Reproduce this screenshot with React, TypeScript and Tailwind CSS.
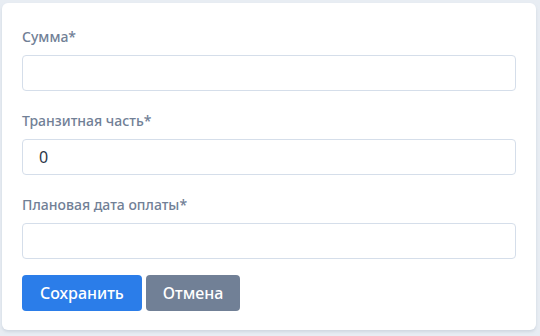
export default function App() {
  const label = "block text-[14px] font-medium text-[#718096] leading-[20px] mb-[8px]";
  const input =
    "block w-full h-[36px] rounded-[4px] border border-[#d5deea] bg-white px-4 text-[16px] text-[#2d3748] outline-none";
  return (
    <div
      className="w-[540px] h-[336px] bg-[#e8edf3] pt-[3px] pl-[2px] pr-[4px]"
      style={{ fontFamily: '"Noto Sans", "Open Sans", sans-serif' }}
    >
      <div className="bg-white rounded-[6px] h-[327px] shadow-[0_2px_3px_rgba(160,174,192,0.35)] px-5 pt-[24px]">
        <label className={label}>Сумма*</label>
        <input className={input} defaultValue="" />
        <label className={label + " mt-[20px]"}>Транзитная часть*</label>
        <input className={input} defaultValue="0" />
        <label className={label + " mt-[20px]"}>Плановая дата оплаты*</label>
        <input className={input} defaultValue="" />
        <div className="flex gap-[4px] mt-[16px]">
          <button className="h-[36px] px-[18px] rounded-[4px] bg-[#2b7de9] text-white text-[16px] font-medium">
            Сохранить
          </button>
          <button className="h-[36px] px-[17px] rounded-[4px] bg-[#718096] text-white text-[16px] font-medium">
            Отмена
          </button>
        </div>
      </div>
    </div>
  );
}
